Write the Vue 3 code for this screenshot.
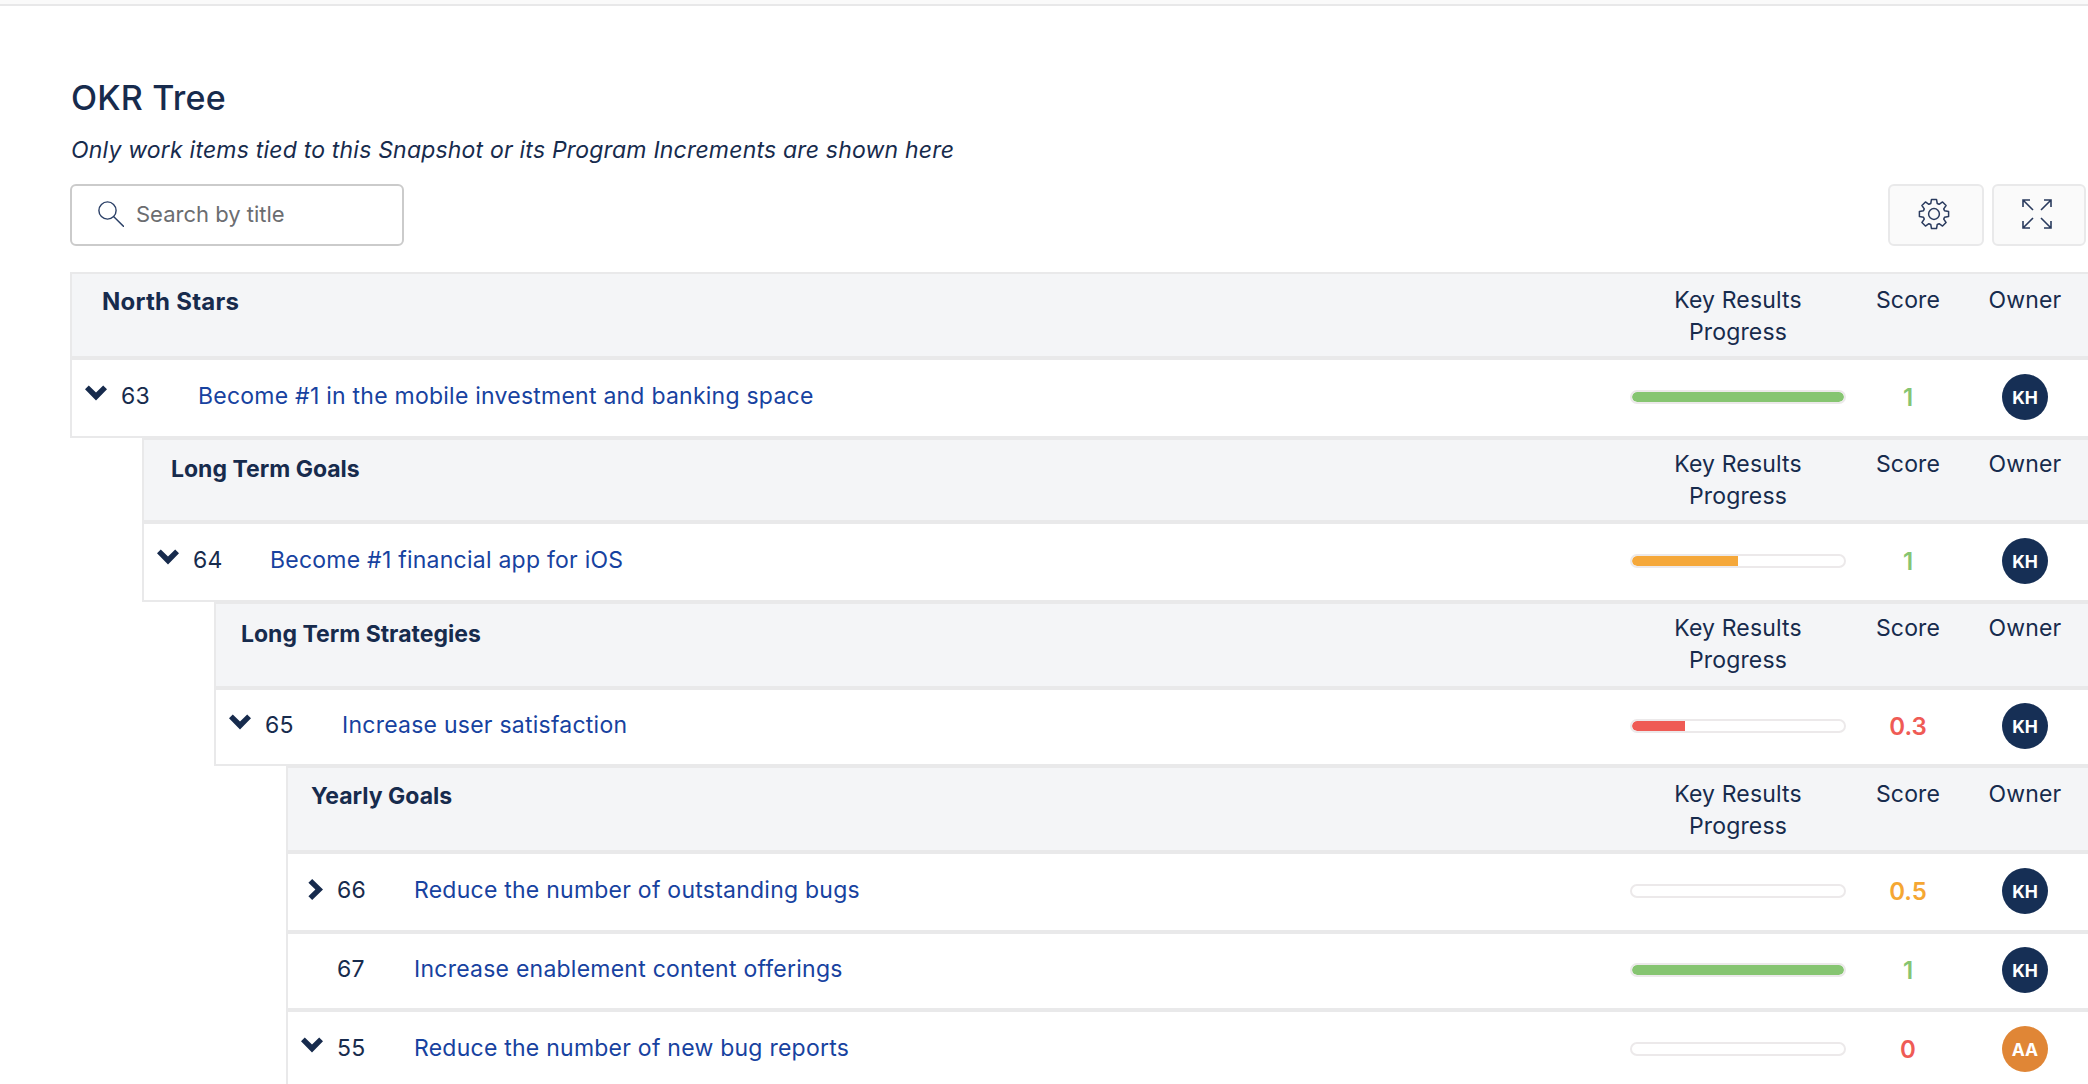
<script setup>
const gearPath = (() => {
  const cx = 16, cy = 16, teeth = 8, ro = 14.8, ri = 11
  const pts = []
  for (let i = 0; i < teeth; i++) {
    const a = (i * 2 * Math.PI) / teeth - Math.PI / 2
    const w = [-0.3, -0.17, 0.17, 0.3]
    const r = [ri, ro, ro, ri]
    w.forEach((d, k) => {
      pts.push(`${(cx + r[k] * Math.cos(a + d)).toFixed(2)} ${(cy + r[k] * Math.sin(a + d)).toFixed(2)}`)
    })
  }
  return 'M' + pts.join('L') + 'Z'
})()

const columns = ['Key Results', 'Progress']
const items = [
  { type: 'head', level: 0, title: 'North Stars', height: 86, pad: 30, titleTop: 12, colTop: 10, large: true },
  { type: 'row', level: 0, height: 80, chevron: 'down', id: 63, title: 'Become #1 in the mobile investment and banking space', progress: 100, bar: 'green', score: '1', tone: 'green', owner: 'KH' },
  { type: 'head', level: 1, title: 'Long Term Goals', height: 84, pad: 27, titleTop: 13, colTop: 8 },
  { type: 'row', level: 1, height: 80, chevron: 'down', id: 64, title: 'Become #1 financial app for iOS', progress: 50, bar: 'orange', score: '1', tone: 'green', owner: 'KH' },
  { type: 'head', level: 2, title: 'Long Term Strategies', height: 86, pad: 25, titleTop: 14, colTop: 8 },
  { type: 'row', level: 2, height: 78, chevron: 'down', id: 65, title: 'Increase user satisfaction', progress: 25, bar: 'red', score: '0.3', tone: 'red', owner: 'KH' },
  { type: 'head', level: 3, title: 'Yearly Goals', height: 86, pad: 23, titleTop: 12, colTop: 10 },
  { type: 'row', level: 3, height: 80, chevron: 'right', id: 66, title: 'Reduce the number of outstanding bugs', progress: 0, bar: 'orange', score: '0.5', tone: 'orange', owner: 'KH' },
  { type: 'row', level: 3, height: 78, chevron: null, id: 67, title: 'Increase enablement content offerings', progress: 100, bar: 'green', score: '1', tone: 'green', owner: 'KH' },
  { type: 'row', level: 3, height: 80, chevron: 'down', id: 55, title: 'Reduce the number of new bug reports', progress: 0, bar: 'red', score: '0', tone: 'red', owner: 'AA' },
]
</script>

<template>
  <div class="page">
    <div class="topbar"></div>
    <main class="content">
      <h1 class="title">OKR Tree</h1>
      <p class="subtitle">Only work items tied to this Snapshot or its Program Increments are shown here</p>

      <div class="toolbar">
        <label class="search">
          <svg class="search-icon" viewBox="0 0 26 26" width="26" height="26" fill="none" stroke="#2a3f66" stroke-width="1.4">
            <circle cx="9.5" cy="9.5" r="8.6" />
            <path d="M15.8 15.8 25.6 25.4" stroke-linecap="round" />
          </svg>
          <input class="search-input" type="text" placeholder="Search by title" />
        </label>
        <div class="actions">
          <button class="tool tool-gear" type="button" aria-label="Settings">
            <svg viewBox="0 0 32 32" width="32" height="32" fill="none" stroke="#2a3b5e" stroke-width="1.5" stroke-linejoin="round">
              <path :d="gearPath" />
              <circle cx="16" cy="16" r="5.4" />
            </svg>
          </button>
          <button class="tool tool-expand" type="button" aria-label="Expand">
            <svg viewBox="0 0 30 30" width="30" height="30" fill="none" stroke="#2a3b5e" stroke-width="1.6">
              <path d="M1 8V1H8M1 1 11 11" />
              <path d="M29 8V1H22M29 1 19 11" />
              <path d="M1 22V29H8M1 29 11 19" />
              <path d="M29 22V29H22M29 29 19 19" />
            </svg>
          </button>
        </div>
      </div>

      <div class="tree">
        <template v-for="(item, i) in items" :key="i">
          <div
            v-if="item.type === 'head'"
            class="line head"
            :style="{ marginLeft: item.level * 72 + 'px', height: item.height + 'px' }"
          >
            <div class="head-title" :class="{ large: item.large }" :style="{ paddingLeft: item.pad + 'px', paddingTop: item.titleTop + 'px' }">{{ item.title }}</div>
            <div class="head-col" :style="{ paddingTop: item.colTop + 'px' }">{{ columns[0] }}<br />{{ columns[1] }}</div>
            <div class="head-col" :style="{ paddingTop: item.colTop + 'px' }">Score</div>
            <div class="head-col" :style="{ paddingTop: item.colTop + 'px' }">Owner</div>
          </div>

          <div
            v-else
            class="line row"
            :style="{ marginLeft: item.level * 72 + 'px', height: item.height + 'px' }"
          >
            <div class="row-main">
              <span class="chevron-slot">
                <svg v-if="item.chevron === 'down'" class="chevron-down" viewBox="0 0 22 16" width="22" height="16">
                  <path d="M0 4.200 3.800 0.400 11 7.400 18.200 0.400 22 4.200 11 15.600Z" fill="#172b4d" />
                </svg>
                <svg v-else-if="item.chevron === 'right'" class="chevron-right" viewBox="0 0 15 21" width="15" height="21">
                  <path d="M4.200 0 15 10.500 4.200 21 0.400 17.300 7.400 10.500 0.400 3.700Z" fill="#172b4d" />
                </svg>
              </span>
              <span class="row-id">{{ item.id }}</span>
              <a class="row-title">{{ item.title }}</a>
            </div>
            <div class="cell">
              <div class="bar">
                <div
                  class="bar-fill"
                  :class="['fill-' + item.bar, { full: item.progress === 100 }]"
                  :style="{ width: item.progress + '%' }"
                ></div>
              </div>
            </div>
            <div class="cell score" :class="'tone-' + item.tone">{{ item.score }}</div>
            <div class="cell">
              <span class="avatar" :class="{ alt: item.owner === 'AA' }">{{ item.owner }}</span>
            </div>
          </div>
        </template>
      </div>
    </main>
  </div>
</template>

<style>
html, body { margin: 0; background: #fff; overflow: hidden; }
</style>

<style scoped>
.page {
  width: 2088px;
  height: 1084px;
  overflow: hidden;
  background: #fff;
  font-family: Inter, "Liberation Sans", sans-serif;
  color: #172b4d;
}
.topbar {
  height: 4px;
  background: #fafafa;
  border-bottom: 2px solid #e8e8e9;
}
.content { padding: 72px 0 0 70px; }
.title {
  margin: 0;
  font-size: 34px;
  line-height: 40px;
  font-weight: 500;
  letter-spacing: 0.2px;
  padding-left: 1px;
}
.subtitle {
  margin: 16px 0 0;
  padding-left: 1px;
  font-size: 23px;
  line-height: 32px;
  font-style: italic;
  letter-spacing: 0.2px;
}
.toolbar {
  margin-top: 18px;
  display: flex;
  justify-content: space-between;
  align-items: flex-start;
  padding-right: 2px;
}
.search {
  box-sizing: border-box;
  width: 334px;
  height: 62px;
  border: 2px solid #cbcbcb;
  border-radius: 6px;
  display: flex;
  align-items: center;
  padding-left: 26px;
  gap: 12px;
}
.search-icon { flex: none; margin-top: -2px; }
.search-input {
  border: 0;
  outline: 0;
  padding: 0 0 2px;
  width: 240px;
  background: transparent;
  font: 400 22px Inter, "Liberation Sans", sans-serif;
  color: #6b6d70;
}
.search-input::placeholder { color: #6b6d70; opacity: 1; }
.actions { display: flex; gap: 8px; }
.tool {
  box-sizing: border-box;
  height: 62px;
  padding: 0;
  border: 2px solid #e9e9ea;
  border-radius: 6px;
  background: #fafafa;
  display: flex;
  align-items: center;
  justify-content: center;
}
.tool svg { display: block; margin-top: -2px; }
.tool-gear { width: 96px; }
.tool-gear svg { margin-left: -4px; }
.tool-expand { width: 94px; }
.tool-expand svg { margin-left: -4px; }
.tree { margin-top: 26px; }
.line {
  box-sizing: border-box;
  display: grid;
  grid-template-columns: 1fr 216px 124px 110px;
  padding-right: 8px;
  border: 2px solid #e9e9ea;
  border-right: 0;
}
.head {
  background: #f4f5f7;
  font-size: 23px;
  line-height: 32px;
  letter-spacing: 0.15px;
}
.head-title { font-weight: 700; letter-spacing: 0; }
.head-title.large { font-size: 24px; letter-spacing: 0.25px; }
.head-col { text-align: center; }
.row { background: #fff; align-items: center; }
.row-main {
  display: grid;
  grid-template-columns: 49px 77px 1fr;
  align-items: center;
  font-size: 23px;
  line-height: 32px;
  letter-spacing: 0.24px;
  padding-bottom: 4px;
}
.chevron-slot { display: block; padding-left: 13px; height: 22px; }
.chevron-down { display: block; }
.chevron-right { display: block; margin-left: 7px; }
.row-id { color: #172b4d; }
.row-title { color: #1742a0; }
.cell { display: flex; justify-content: center; align-items: center; padding-bottom: 2px; }
.bar {
  box-sizing: border-box;
  width: 216px;
  height: 14px;
  border: 2px solid #ece9ea;
  border-radius: 7px;
  background: #fff;
  overflow: hidden;
}
.bar-fill { height: 100%; border-radius: 5px 0 0 5px; }
.bar-fill.full { border-radius: 5px; }
.fill-green { background: #86c571; }
.fill-orange { background: #f5a83a; }
.fill-red { background: #ef5b55; }
.score { font-size: 24px; font-weight: 600; line-height: 32px; padding-bottom: 0; }
.tone-green { color: #86c571; }
.tone-orange { color: #f5a733; }
.tone-red { color: #ef5b55; }
.avatar {
  width: 46px;
  height: 46px;
  border-radius: 50%;
  background: #162f55;
  color: #fff;
  font-size: 17.5px;
  font-weight: 700;
  display: flex;
  align-items: center;
  justify-content: center;
}
.avatar.alt { background: #e08636; }
</style>
